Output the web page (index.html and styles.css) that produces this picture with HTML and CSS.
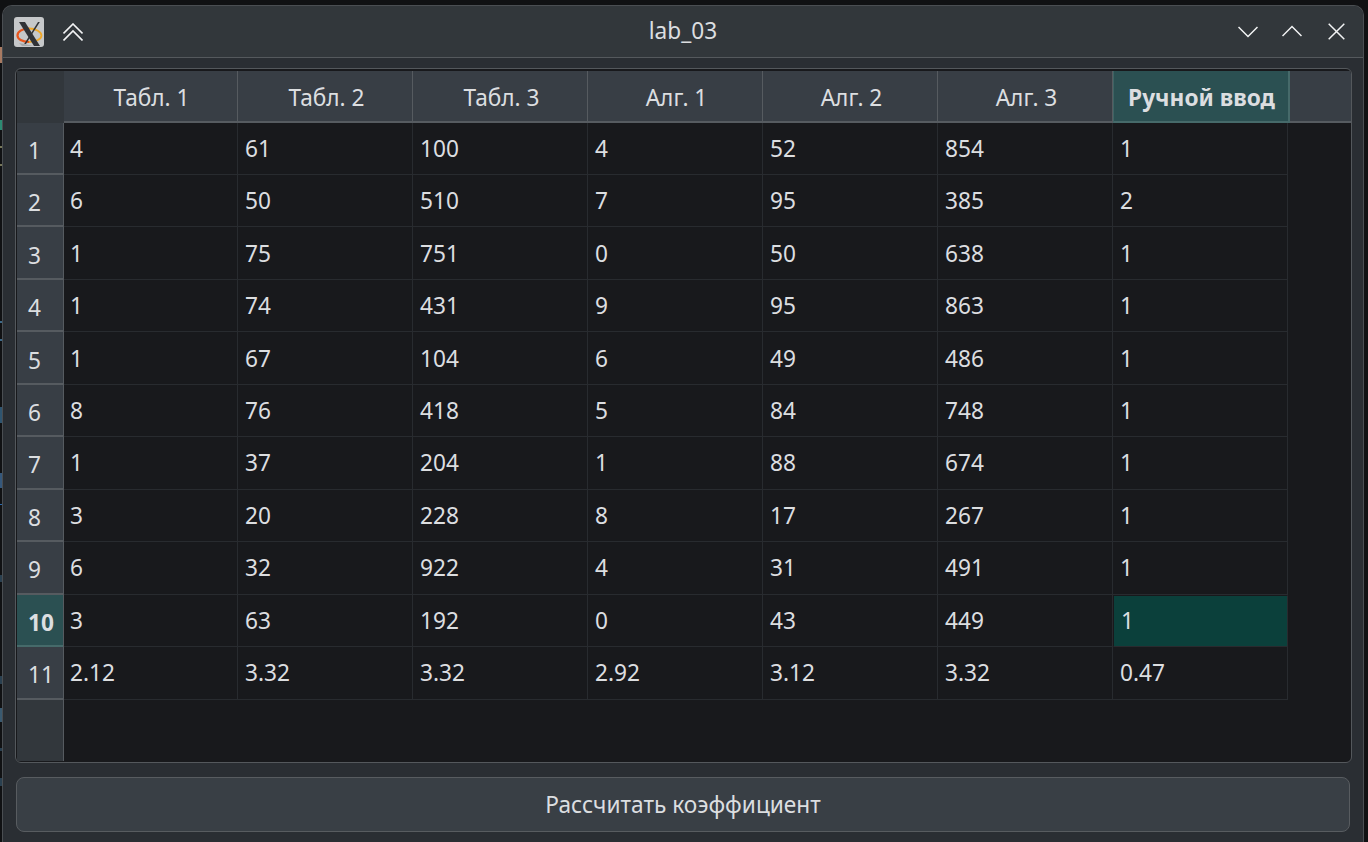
FILE: index.html
```html
<!DOCTYPE html>
<html lang="en">
<head>
    <meta charset="UTF-8">
    <meta name="viewport" content="width=device-width, initial-scale=1.0">
    <title>lab_03</title>
    <link rel="stylesheet" href="styles.css">
</head>
<body>
    <div class="window">
        <div class="titlebar">
            <div class="title-left">
                <svg class="app-icon" width="30" height="30" viewBox="0 0 30 30">
                    <rect x="0" y="0" width="30" height="30" rx="3" fill="#c6c8ca"/>
                    <path d="M5 26 L20 29 H8z" fill="#a4a6a8"/>
                    <path d="M15 11.500C8 11.500 3.500 15 3.500 18.500S8 25 15 25" fill="none" stroke="#e8551c" stroke-width="2.200"/>
                    <path d="M15 11.500C22 11.500 27.500 15 27.500 18.500S22 25 15 25" fill="none" stroke="#f0a828" stroke-width="1.800"/>
                    <path d="M5 5h6l15 24h-6z" fill="#303236"/>
                    <path d="M24 5h1.800L12 27h-1.800z" fill="#303236"/>
                </svg>
                <svg class="ctl" width="20" height="18" viewBox="0 0 20 18">
                    <path d="M.5 10.500 10 1l9.500 9.500M.5 17.500 10 8l9.500 9.500" fill="none" stroke="#f2f3f4" stroke-width="1.600"/>
                </svg>
            </div>
            <div class="title-text">lab_03</div>
            <div class="title-right">
                <svg class="ctl-min" width="20" height="12" viewBox="0 0 20 12"><path d="M.5 1 10 10.500 19.500 1" fill="none" stroke="#f2f3f4" stroke-width="1.500"/></svg>
                <svg class="ctl-max" width="20" height="12" viewBox="0 0 20 12"><path d="M.5 11 10 1.500 19.500 11" fill="none" stroke="#f2f3f4" stroke-width="1.500"/></svg>
                <svg class="ctl-close" width="17" height="17" viewBox="0 0 17 17"><path d="M.7.700l15.600 15.600M16.300.700.700 16.300" fill="none" stroke="#f2f3f4" stroke-width="1.500"/></svg>
            </div>
        </div>

        <div class="content">
            <div class="table-frame">
                <div class="table-head">
                    <div class="corner"></div>
                    <div class="col-head col-first">Табл. 1</div>
                    <div class="col-head">Табл. 2</div>
                    <div class="col-head">Табл. 3</div>
                    <div class="col-head">Алг. 1</div>
                    <div class="col-head">Алг. 2</div>
                    <div class="col-head">Алг. 3</div>
                    <div class="col-head col-active">Ручной ввод</div>
                    <div class="head-fill"></div>
                </div>
                <div class="table-body">
                    <div class="row-heads">
                        <div class="row-head">1</div>
                        <div class="row-head">2</div>
                        <div class="row-head">3</div>
                        <div class="row-head">4</div>
                        <div class="row-head">5</div>
                        <div class="row-head">6</div>
                        <div class="row-head">7</div>
                        <div class="row-head">8</div>
                        <div class="row-head">9</div>
                        <div class="row-head row-active">10</div>
                        <div class="row-head">11</div>
                        <div class="row-fill"></div>
                    </div>
                    <div class="cells">
                        <div class="cell">4</div><div class="cell">61</div><div class="cell">100</div><div class="cell">4</div><div class="cell">52</div><div class="cell">854</div><div class="cell">1</div>
                        <div class="cell">6</div><div class="cell">50</div><div class="cell">510</div><div class="cell">7</div><div class="cell">95</div><div class="cell">385</div><div class="cell">2</div>
                        <div class="cell">1</div><div class="cell">75</div><div class="cell">751</div><div class="cell">0</div><div class="cell">50</div><div class="cell">638</div><div class="cell">1</div>
                        <div class="cell">1</div><div class="cell">74</div><div class="cell">431</div><div class="cell">9</div><div class="cell">95</div><div class="cell">863</div><div class="cell">1</div>
                        <div class="cell">1</div><div class="cell">67</div><div class="cell">104</div><div class="cell">6</div><div class="cell">49</div><div class="cell">486</div><div class="cell">1</div>
                        <div class="cell">8</div><div class="cell">76</div><div class="cell">418</div><div class="cell">5</div><div class="cell">84</div><div class="cell">748</div><div class="cell">1</div>
                        <div class="cell">1</div><div class="cell">37</div><div class="cell">204</div><div class="cell">1</div><div class="cell">88</div><div class="cell">674</div><div class="cell">1</div>
                        <div class="cell">3</div><div class="cell">20</div><div class="cell">228</div><div class="cell">8</div><div class="cell">17</div><div class="cell">267</div><div class="cell">1</div>
                        <div class="cell">6</div><div class="cell">32</div><div class="cell">922</div><div class="cell">4</div><div class="cell">31</div><div class="cell">491</div><div class="cell">1</div>
                        <div class="cell">3</div><div class="cell">63</div><div class="cell">192</div><div class="cell">0</div><div class="cell">43</div><div class="cell">449</div><div class="cell cell-active">1</div>
                        <div class="cell">2.12</div><div class="cell">3.32</div><div class="cell">3.32</div><div class="cell">2.92</div><div class="cell">3.12</div><div class="cell">3.32</div><div class="cell">0.47</div>
                    </div>
                </div>
            </div>
            <button class="calc-btn" type="button">Рассчитать коэффициент</button>
        </div>
    </div>
</body>
</html>
```

FILE: styles.css
```css
* {
    box-sizing: border-box;
}
html, body {
    height: 100%;
}
body {
    margin: 0;
    padding: 5px 4px 0 2px;
    overflow: hidden;
    /* bits of the desktop showing left of the window */
    background-color: #101113;
    background-image: linear-gradient(to bottom,
        #101113 47px, #a87a62 47px, #a87a62 63px, #101113 63px,
        #101113 120px, #2c8a72 120px, #2c8a72 130px, #101113 130px,
        #101113 146px, #77775a 146px, #77775a 148px, #101113 148px,
        #101113 164px, #77775a 164px, #77775a 166px, #101113 166px,
        #101113 321px, #3d6a8a 321px, #3d6a8a 323px, #101113 323px,
        #101113 339px, #3d6a8a 339px, #3d6a8a 341px, #101113 341px,
        #101113 407px, #2f5570 407px, #2f5570 423px, #101113 423px,
        #101113 473px, #35587c 473px, #35587c 488px, #101113 488px,
        #101113 504px, #2a6ab0 504px, #2a6ab0 505px, #101113 505px,
        #101113 575px, #2a4050 575px, #2a4050 582px, #101113 582px,
        #101113 676px, #2a4050 676px, #2a4050 684px, #101113 684px,
        #101113 708px, #3a5a70 708px, #3a5a70 722px, #101113 722px,
        #101113 748px, #2a4050 748px, #2a4050 751px, #101113 751px,
        #101113 778px, #2a4050 778px, #2a4050 786px, #101113 786px);
    background-size: 2px 100%;
    background-repeat: no-repeat;
    font-family: "Noto Sans", sans-serif;
    font-size: 22.67px;
    color: #dcdee0;
}
.window {
    height: 100%;
    display: flex;
    flex-direction: column;
    background-color: #2a2e33;
    border: 1px solid #4a4e52;
    border-bottom: none;
    border-radius: 10px 10px 0 0;
}
.titlebar {
    height: 52px;
    flex: none;
    display: flex;
    align-items: center;
    justify-content: space-between;
    position: relative;
    padding: 0 18px 0 11px;
    background-color: #32373b;
    border-bottom: 1px solid #55595d;
    border-radius: 9px 9px 0 0;
}
.title-left {
    display: flex;
    align-items: center;
    gap: 19px;
}
.app-icon {
    margin-top: 1px;
}
.title-text {
    position: absolute;
    left: 0;
    right: 0;
    top: 9px;
    text-align: center;
    pointer-events: none;
}
.title-right {
    display: flex;
    align-items: center;
    gap: 24px;
}
.ctl-max {
    margin-bottom: 2px;
}
.ctl-close {
    margin-left: 2px;
}
.content {
    flex: 1;
    display: flex;
    flex-direction: column;
    padding: 10px 11px 9px 12px;
}
.table-frame {
    height: 695px;
    flex: none;
    display: flex;
    flex-direction: column;
    padding: 2px 0 1px 1px;
    background-color: #18191c;
    border: 1px solid #54585c;
    border-radius: 6px;
    overflow: hidden;
}
.table-head {
    height: 51.55px;
    flex: none;
    display: flex;
}
.corner {
    width: 47px;
    flex: none;
    background-color: #32373c;
}
.col-head {
    width: 175px;
    flex: none;
    display: flex;
    align-items: center;
    justify-content: center;
    padding: 4px 0 0 3px;
    background-color: #383e45;
    border-right: 1px solid #565b60;
    border-bottom: 2px solid #565b60;
}
.col-first {
    width: 174px;
    padding-left: 2px;
}
.col-active {
    width: 177px;
    padding-left: 1px;
    font-weight: 700;
    background-color: #2b5052;
    border-left: 1px solid #3e6464;
    border-right: 2px solid #466a6a;
    border-bottom-color: #466a6a;
}
.head-fill {
    flex: 1;
    background-color: #383e45;
    border-bottom: 2px solid #565b60;
}
.table-body {
    flex: 1;
    display: flex;
    min-height: 0;
}
.row-heads {
    width: 47px;
    flex: none;
    display: flex;
    flex-direction: column;
    background-color: #32373c;
    border-right: 1px solid #565b60;
}
.row-head {
    height: 52.46px;
    flex: none;
    display: flex;
    align-items: center;
    padding: 5px 0 0 11px;
    background-color: #383e45;
    border-bottom: 2px solid #565b60;
}
.row-active {
    font-weight: 700;
    background-color: #2b5052;
    border-bottom-color: #466a6a;
}
.row-fill {
    flex: 1;
}
.cells {
    align-self: flex-start;
    display: grid;
    grid-template-columns: 174px repeat(6, 175px);
    grid-auto-rows: 52.46px;
}
.cell {
    display: flex;
    align-items: center;
    padding: 0 0 0 7px;
    border-right: 1px solid #282b2f;
    border-bottom: 1px solid #282b2f;
}
.cell:nth-child(7n+1) {
    padding-left: 6px;
}
.cell-active {
    background-color: #0b403b;
    border-top: 1px solid #18191c;
    border-left: 1px solid #18191c;
}
.calc-btn {
    height: 55px;
    flex: none;
    margin: 14px 2px 0 1px;
    padding: 0 0 1px;
    font: inherit;
    color: #dcdee0;
    background-color: #393f45;
    border: 1px solid #585c60;
    border-radius: 8px;
}
```
